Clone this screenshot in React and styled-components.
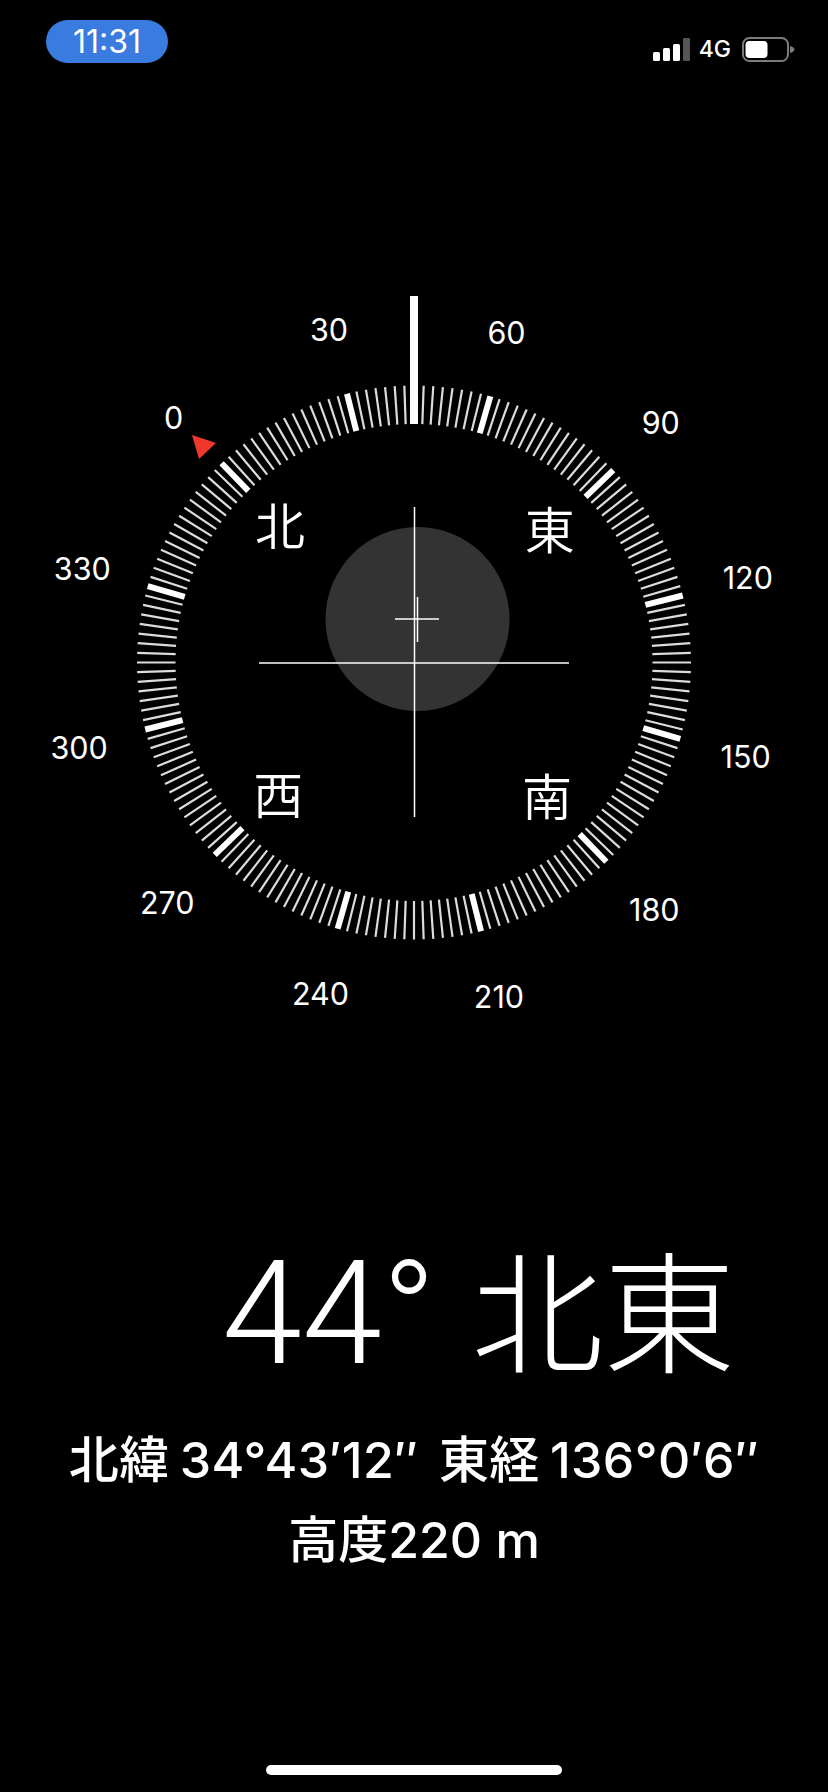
import React from 'react';
import styled, { createGlobalStyle } from 'styled-components';

const Global = createGlobalStyle`
  html, body { margin: 0; padding: 0; background: #000; }
  body { width: 828px; height: 1792px; overflow: hidden; }
`;

const SANS = `"Inter", "Liberation Sans", "Noto Sans CJK JP", sans-serif`;
const HEADING = -44;
const CX = 414;
const CY = 400.5;

const Page = styled.div`
  width: 828px;
  height: 1792px;
  background: #000;
  color: #fff;
  font-family: ${SANS};
  display: flex;
  flex-direction: column;
`;

const StatusBar = styled.header`
  display: flex;
  justify-content: space-between;
  align-items: flex-start;
  padding: 20px 33px 0 46px;
  height: 242px;
`;

const TimePill = styled.div`
  width: 122px;
  height: 43px;
  border-radius: 22px;
  background: #3a7be0;
  display: flex;
  align-items: center;
  justify-content: center;
  font: 400 32px "Inter", "Liberation Sans", sans-serif;
`;

const StatusIcons = styled.div`
  display: flex;
  align-items: center;
  margin-top: 17px;
`;

const Network = styled.span`
  font: 500 23px/25px "Inter", "Liberation Sans", sans-serif;
  margin: 0 11px 0 9px;
`;

const Dial = styled.section`
  position: relative;
  width: 828px;
  height: 800px;
  flex: none;
`;

const DialDrawing = styled.svg`
  display: block;
`;

const PolarLabel = styled.span`
  position: absolute;
  transform: translate(-50%, -50%);
  white-space: nowrap;
  line-height: 1;
`;

const Degree = styled(PolarLabel)`
  font-size: 30.5px;
`;

const Cardinal = styled(PolarLabel)`
  font-family: "Noto Sans CJK JP", sans-serif;
  font-weight: 350;
  font-size: 50px;
`;

const Readout = styled.section`
  flex: 1;
  display: flex;
  flex-direction: column;
`;

const Heading = styled.h1`
  margin: 169px 0 0;
  padding-left: 222px;
  font: 300 144px/150px "Roboto", "Noto Sans CJK JP", sans-serif;
  white-space: nowrap;
`;

const HeadingDirection = styled.span`
  font: 300 132px/150px "Noto Sans CJK JP", sans-serif;
`;

const Coordinates = styled.p`
  margin: 40px 0 0;
  text-align: center;
  font: 500 50px/62px "Inter", "Noto Sans CJK JP", sans-serif;
  letter-spacing: 0.4px;
  word-spacing: -3.5px;
  white-space: nowrap;
`;

const Altitude = styled(Coordinates)`
  margin-top: 18px;
  word-spacing: 0;
  letter-spacing: 0;
`;

const HomeIndicator = styled.div`
  width: 296px;
  height: 10px;
  border-radius: 5px;
  background: #fff;
  margin: auto auto 17px;
`;

const polar = (deg, r) => {
  const a = ((HEADING + deg) * Math.PI) / 180;
  return { x: CX + r * Math.sin(a), y: CY - r * Math.cos(a) };
};

const Ticks = () => {
  const out = [];
  for (let d = 0; d < 360; d += 2) {
    const a = polar(d, 238.5);
    const b = polar(d, 277);
    const major = d % 30 === 0;
    out.push(
      <line key={d} x1={a.x} y1={a.y} x2={b.x} y2={b.y}
        stroke={major ? '#fff' : '#dcdcdc'} strokeWidth={major ? 6 : 2.2} />
    );
  }
  return out;
};

const degrees = [
  [0, -2, 2], [30, -2, 0], [60, -2, 0], [90, 0, -1], [120, 1, -2], [150, 2, 0],
  [180, 2, 1], [210, 2, 2], [240, 1, 2], [270, 0, 2], [300, -2, 3], [330, -2, 1],
];
const cardinals = [
  ['北', 0, -2, -3], ['東', 90, -1, -4], ['南', 180, 1, -5], ['西', 270, 1, -2],
];

const at = (deg, r, dx, dy) => {
  const p = polar(deg, r);
  return { left: p.x + dx, top: p.y + dy };
};

export default function App() {
  return (
    <Page>
      <Global />
      <StatusBar>
        <TimePill>11:31</TimePill>
        <StatusIcons>
          <svg width="37" height="23" viewBox="0 0 37 23">
            <rect x="0" y="14" width="7" height="9" rx="1.5" fill="#fff" />
            <rect x="10" y="10" width="7" height="13" rx="1.5" fill="#fff" />
            <rect x="20" y="6" width="7" height="17" rx="1.5" fill="#fff" />
            <rect x="30" y="0" width="7" height="23" rx="1" fill="#555" />
          </svg>
          <Network>4G</Network>
          <svg width="53" height="25" viewBox="0 0 53 25">
            <rect x="1" y="1" width="45" height="23" rx="6.5" fill="none" stroke="#7c7c7c" strokeWidth="2" />
            <rect x="3.5" y="4" width="22" height="17" rx="4" fill="#fff" />
            <path d="M48 9c2.500 .6 4.500 2 4.500 3.500s-2 2.900-4.500 3.500z" fill="#7c7c7c" />
          </svg>
        </StatusIcons>
      </StatusBar>
      <Dial>
        <DialDrawing width="828" height="800" viewBox="0 0 828 800">
          <Ticks />
          <rect x="410" y="34" width="8" height="128" fill="#fff" />
          <circle cx="417.5" cy="357" r="92" fill="#333" />
          <line x1="414.5" y1="245" x2="414.5" y2="555" stroke="#fff" strokeWidth="1.5" />
          <line x1="259" y1="401" x2="569" y2="401" stroke="#fff" strokeWidth="1.5" />
          <line x1="395" y1="357" x2="439" y2="357" stroke="#fff" strokeWidth="1.5" />
          <line x1="417.5" y1="335" x2="417.5" y2="380" stroke="#fff" strokeWidth="1.5" />
          <polygon points="192,173 216,181 199,197" fill="#f0372b" />
        </DialDrawing>
        {degrees.map(([d, dx, dy]) => (
          <Degree key={d} style={at(d, 343, dx, dy)}>{d}</Degree>
        ))}
        {cardinals.map(([c, d, dx, dy]) => (
          <Cardinal key={c} style={at(d, 190, dx, dy)}>{c}</Cardinal>
        ))}
      </Dial>
      <Readout>
        <Heading>44° <HeadingDirection>北東</HeadingDirection></Heading>
        <Coordinates>北緯 34°43′12″&nbsp; 東経 136°0′6″</Coordinates>
        <Altitude>高度220 m</Altitude>
        <HomeIndicator />
      </Readout>
    </Page>
  );
}
